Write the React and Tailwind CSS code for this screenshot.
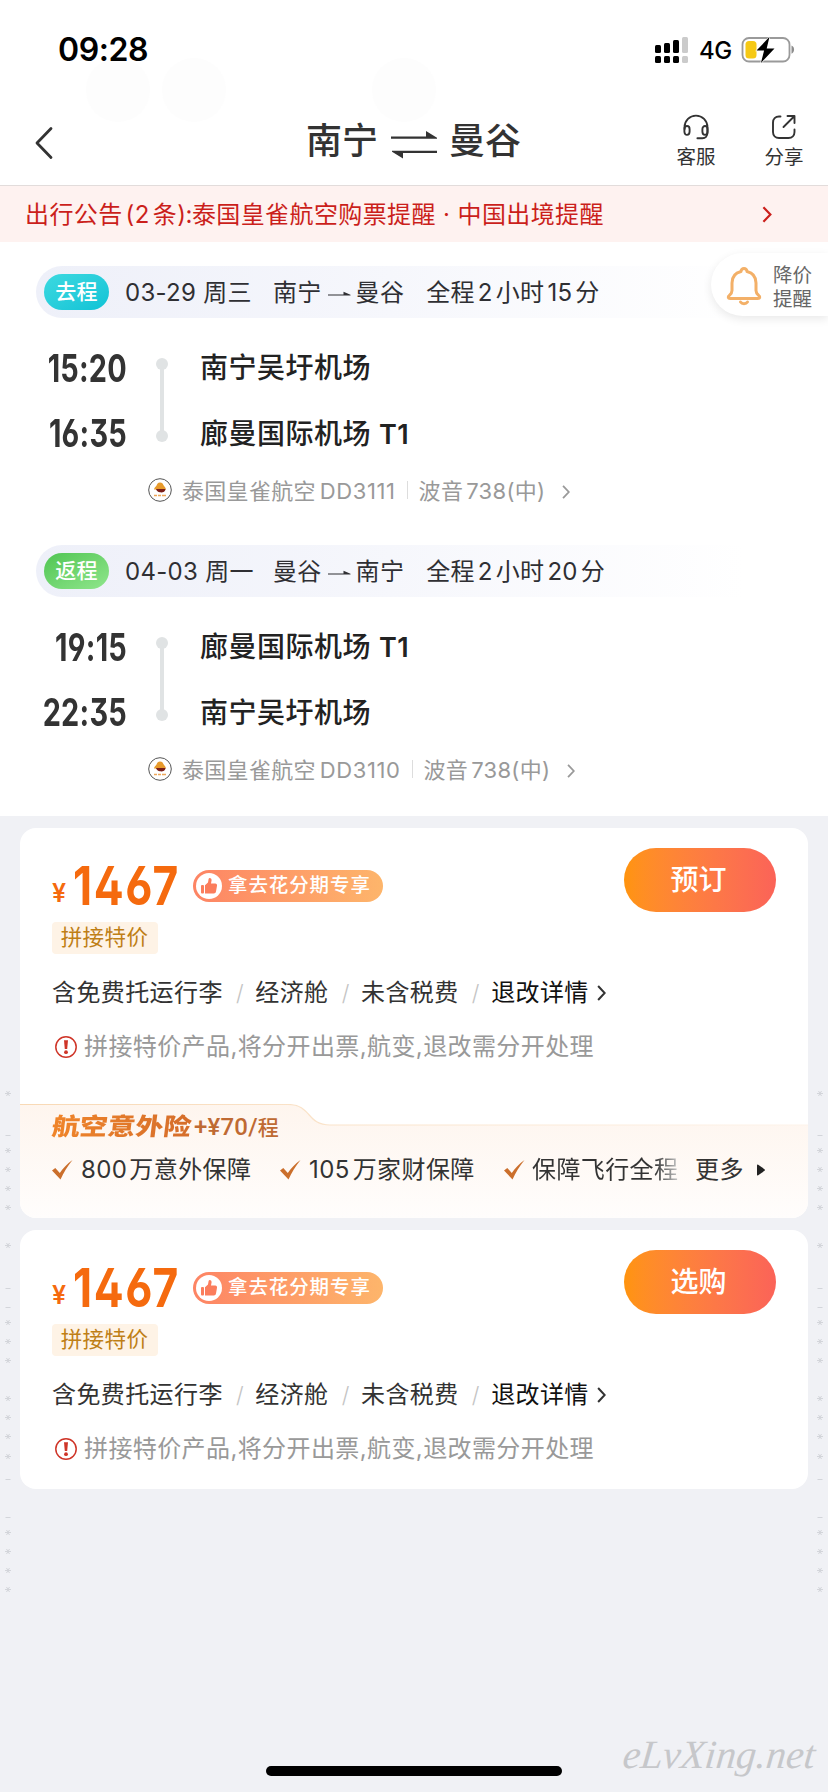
import React from "react";

const trips = [
  {
    label: "去程",
    badge: "from-[#3bd9e0] to-[#0cc3d6]",
    date: "03-29 周三",
    from: "南宁",
    to: "曼谷",
    duration: ["全程", "2", "小时", "15", "分"],
    stops: [
      { time: "15:20", name: "南宁吴圩机场" },
      { time: "16:35", name: "廊曼国际机场", terminal: "T1" },
    ],
    flightNo: "DD3111",
  },
  {
    label: "返程",
    badge: "from-[#4fc552] to-[#8fe68c]",
    date: "04-03 周一",
    from: "曼谷",
    to: "南宁",
    duration: ["全程", "2", "小时", "20", "分"],
    stops: [
      { time: "19:15", name: "廊曼国际机场", terminal: "T1" },
      { time: "22:35", name: "南宁吴圩机场" },
    ],
    flightNo: "DD3110",
  },
];

// y offsets inside the gutter, which starts at the top of the list
const stars = [277, 334, 353, 372, 391, 429, 506, 525, 544, 582, 601, 620, 640, 716, 735, 754, 773];
const dashes = [319, 472, 491, 663, 701];

const Chevron = ({ className }) => (
  <svg viewBox="0 0 10 18" fill="none" stroke="currentColor" strokeWidth="2.3" className={className}>
    <path d="M1.2 1.2 8.6 9l-7.4 7.8" />
  </svg>
);

const StatusBar = () => (
  <div className="relative flex h-[100px] items-start justify-between pl-[58px] pr-[33px]">
    <span className="absolute left-[86px] top-[58px] size-16 rounded-full bg-[#fdfdfd]" />
    <span className="absolute left-[162px] top-[58px] size-16 rounded-full bg-[#fdfdfd]" />
    <span className="absolute left-[372px] top-[58px] size-16 rounded-full bg-[#fdfdfd]" />
    <div className="relative mt-[30px] text-[32px] font-semibold leading-[40px] tracking-[-0.4px] text-black">09:28</div>
    <div className="mt-[36px] flex items-start">
      <svg width="34" height="28" viewBox="0 0 34 28" className="mr-[10px]">
        <g fill="#000">
          <rect x="0" y="9" width="6" height="8" rx="1.5" />
          <rect x="9" y="7" width="6" height="10" rx="1.5" />
          <rect x="18" y="4" width="6" height="13" rx="1.5" />
          <rect x="0" y="20" width="6" height="7" rx="1.5" />
          <rect x="9" y="20" width="6" height="7" rx="1.5" />
          <rect x="18" y="20" width="6" height="7" rx="1.5" />
        </g>
        <g fill="#cbcbcb">
          <rect x="27" y="1" width="6" height="16" rx="1.5" />
          <rect x="27" y="20" width="6" height="7" rx="1.5" />
        </g>
      </svg>
      <span className="mr-[10px] w-[32px] text-[24px] font-medium leading-[29px] tracking-[-0.6px] text-black">4G</span>
      <svg width="54" height="28" viewBox="0 0 54 28">
        <rect x="1.5" y="2" width="47" height="23.5" rx="6.5" fill="#fff" stroke="#9a9a9a" strokeWidth="1.8" />
        <path d="M50.5 9.6c3.4 1.2 3.4 7 0 8.2z" fill="#8d8d8d" />
        <rect x="4.5" y="5" width="11" height="17.5" rx="3.5" fill="#f6c915" />
        <path d="M28.5.8 15.5 14.6h7.6L19.9 27l13.6-14.6h-7.8z" fill="#000" stroke="#fff" strokeWidth="1.2" paintOrder="stroke" />
      </svg>
    </div>
  </div>
);

const NavBar = () => (
  <div className="flex h-[85px] items-start">
    <div className="w-[306px] pl-[34px] pt-[26px] text-[#333]">
      <svg width="20" height="34" viewBox="0 0 20 34" fill="none" stroke="currentColor" strokeWidth="2.8" strokeLinecap="round" strokeLinejoin="round">
        <path d="M17 2.5 3 17l14 14.5" />
      </svg>
    </div>
    <div className="flex w-[370px] items-center pt-[21px] text-[36px] font-medium leading-[40px] text-[#333]">
      <span className="w-[85px]">南宁</span>
      <svg width="47" height="34" viewBox="0 0 47 34" fill="#333" className="mr-[11px] mt-[2px]">
        <path d="M0 11.5h35V6l11 6.8v1H0z" />
        <path d="M46 28H12v5.5L1 26.7v-1h45z" />
      </svg>
      <span>曼谷</span>
    </div>
    <div className="flex w-10 flex-col items-center pt-[14px] text-[#333]">
      <svg width="28" height="26" viewBox="0 0 28 26" fill="none" stroke="currentColor" strokeWidth="1.9" strokeLinecap="round">
        <path d="M2.6 15V13a11.4 11.4 0 0 1 22.8 0v6c0 3-2 5.2-5 5.2h-5" />
        <path d="M2.4 15.2c0-4.2 5.2-4.2 5.2 0v2.4c0 4.4-5.2 4.4-5.2 0zM25.6 15.2c0-4.2-5.2-4.2-5.2 0v2.4c0 4.4 5.2 4.4 5.2 0z" />
      </svg>
      <span className="mt-[4px] whitespace-nowrap text-[19.5px] leading-[26px]">客服</span>
    </div>
    <div className="ml-[48px] flex w-10 flex-col items-center pt-[14px] text-[#333]">
      <svg width="26" height="26" viewBox="0 0 26 26" fill="none" stroke="currentColor" strokeWidth="1.9" strokeLinecap="round" strokeLinejoin="round">
        <path d="M9.5 2.5H8c-3.6 0-6 2.4-6 6V18c0 3.6 2.4 6 6 6h9.5c3.6 0 6-2.4 6-6v-2.5" />
        <path d="M16.5 2h7v7M23 2.5 12.5 13" />
      </svg>
      <span className="mt-[4px] whitespace-nowrap text-[19.5px] leading-[26px]">分享</span>
    </div>
  </div>
);

const Notice = () => (
  <div className="flex h-[57px] items-center border-t border-[#e2dcdb] bg-[#fef2f0] pl-[25px] text-[24px] leading-[36px] tracking-[0.4px] text-[#cb1f1b]">
    <span className="w-[737px] whitespace-nowrap pt-[2px]">
      出行公告<span className="ml-[3px] mr-[3px]">(2</span>条<span className="tracking-[-0.5px]">):</span>泰国皇雀航空购票提醒 · 中国出境提醒
    </span>
    <Chevron className="h-[17px] w-[10px]" />
  </div>
);

const PriceAlert = () => (
  <div className="absolute right-0 top-[11px] flex h-[63px] w-[117px] items-center rounded-l-full bg-white pl-[15px] pt-[2px] shadow-[0_3px_10px_rgba(0,0,0,0.09)]">
    <svg width="36" height="40" viewBox="0 0 36 40" fill="none" stroke="#f3b068" strokeWidth="3" strokeLinejoin="round" strokeLinecap="round">
      <path d="M15 5.5a3 3 0 0 1 6 0c5.5 1.3 9 5.500 9 11.500v7.500c0 2 .8 3.300 2.600 4.800 1.900 1.600 1.300 3.200-.8 3.200H4.200c-2.100 0-2.700-1.600-.8-3.200C5.200 27.800 6 26.500 6 24.500V17C6 11 9.500 6.800 15 5.500z" />
      <path d="M14.5 36c1.5 2.2 5.5 2.2 7 0" />
    </svg>
    <div className="ml-[11px] pt-[3px] text-[19.5px] leading-[24px] text-[#666]">
      <div>降价</div>
      <div>提醒</div>
    </div>
  </div>
);

const AirlineLogo = () => (
  <svg width="24" height="24" viewBox="0 0 24 24">
    <circle cx="12" cy="12" r="11.3" fill="#fff" stroke="#555" strokeWidth="1" />
    <path d="M6 11.5c.3-2 1.7-2.6 2.4-3.800C9.300 6 9.600 4.600 12 4.600s2.700 1 3.400 2.400c.7 1.300 2.300 2.300 2.600 4.500z" fill="#e79a2c" />
    <path d="M8 11h9.500c0 3-3.500 3.800-5.500 3.300C10 14 8.500 13 8 11z" fill="#7a1d17" />
    <path d="M6 17.500h3m1 0h3m1 0h4" stroke="#eda75a" strokeWidth="1.6" />
  </svg>
);

const Trip = ({ trip }) => (
  <div className="h-[279px]">
    <div className="ml-9 mr-[84px] flex h-[52px] items-center rounded-l-full bg-gradient-to-r from-[#eef0f9] via-[#f6f7fc] to-white pl-2 text-[24px] leading-[36px] tracking-[0.3px] text-[#2f2f33]">
      <span className={`flex h-9 w-[65px] items-center justify-center rounded-full bg-gradient-to-br text-[21px] font-medium text-white ${trip.badge}`}>
        {trip.label}
      </span>
      <span className="ml-[16px] w-[148px] whitespace-nowrap pt-[2px]">{trip.date}</span>
      <span className="pt-[2px]">{trip.from}</span>
      <svg width="23" height="8" viewBox="0 0 23 8" className="ml-[6px] mr-[5px] mt-1" fill="currentColor">
        <path d="M0 4.4h15.500V1.800l7 2.900v.9H0z" />
      </svg>
      <span className="pt-[2px]">{trip.to}</span>
      <span className="ml-[22px] flex gap-[3px] whitespace-nowrap pt-[2px]">
        {trip.duration.map((part, idx) => (
          <span key={idx}>{part}</span>
        ))}
      </span>
    </div>
    <div className="flex h-[146px] pt-[17px]">
      <div className="w-[127px] text-[38px] font-bold tracking-[0.3px] text-[#333] [font-feature-settings:'ss01']">
        {trip.stops.map((stop) => (
          <div key={stop.time} className="h-[65px] origin-right scale-x-[0.76] text-right leading-[66px]">
            {stop.time}
          </div>
        ))}
      </div>
      <svg width="12" height="84" viewBox="0 0 12 84" fill="#e0e3e4" className="ml-[29px] mt-[23px]">
        <circle cx="6" cy="6" r="6" />
        <rect x="4" y="6" width="4" height="72" />
        <circle cx="6" cy="78" r="6" />
      </svg>
      <div className="ml-[32px] pt-px text-[28px] font-medium tracking-[0.5px] text-[#222]">
        {trip.stops.map((stop) => (
          <div key={stop.time} className="h-[66px] leading-[65px]">
            {stop.name}
            {stop.terminal && <span className="ml-[8px] text-[27px] font-semibold">{stop.terminal}</span>}
          </div>
        ))}
      </div>
    </div>
    <div className="flex h-[52px] items-center pl-[148px] text-[22px] leading-[30px] tracking-[0.3px] text-[#999]">
      <AirlineLogo />
      <span className="ml-[10px] pt-[2px]">泰国皇雀航空</span>
      <span className="ml-[4px] pt-[2px] tracking-[0.6px]">{trip.flightNo}</span>
      <span className="mx-[11px] h-[18px] w-px bg-[#ddd]" />
      <span className="pt-[2px]">波音</span>
      <span className="ml-[3px] pt-[2px]">738(中)</span>
      <Chevron className="ml-[17px] mt-[3px] h-[14px] w-[8px]" />
    </div>
  </div>
);

const Gutter = ({ className }) => (
  <div className={`w-5 shrink-0 ${className}`}>
    <svg width="8" height="800" viewBox="0 0 8 800" stroke="#d3d5da" strokeWidth="1">
      {stars.map((y) => (
        <path key={y} d={`M1 ${y}.5h6M2.5 ${y - 2}l3 5M5.5 ${y - 2}l-3 5`} />
      ))}
      {dashes.map((y) => (
        <path key={y} d={`M1.5 ${y}.5h5`} />
      ))}
    </svg>
  </div>
);

const Slash = () => <span className="w-[32.5px] pl-[2px] text-center text-[22px] font-light text-[#c4c4c4]">/</span>;

const OfferBody = ({ action }) => (
  <div className="h-[276px] px-8 pt-5">
    <div className="flex h-[70px] items-start justify-between">
      <div className="flex h-[66px] items-center text-[#f56a0e]">
        <span className="mt-[26px] w-[21px] text-[25px] font-semibold">¥</span>
        <span className="mt-[10px] w-[120px] origin-left scale-x-[0.82] text-[54px] font-bold leading-[66px] tracking-[2px] [font-feature-settings:'ss01']">
          1467
        </span>
        <span className="mt-[10px] flex h-8 w-[190px] items-center rounded-full bg-gradient-to-r from-[#fd8464] to-[#fdb56b] pl-[3px] text-[19.5px] font-medium tracking-[0.9px] text-white">
          <span className="flex size-[26px] items-center justify-center rounded-full bg-white">
            <svg width="18" height="18" viewBox="0 0 18 18" fill="#fb7d5c">
              <rect x="1" y="8" width="3" height="8.5" rx="1" />
              <path d="M5 8.2 8 5.5 8.6 2c.3-1.5 3-1.2 3 1.200L11 6.600h4.200c1.400 0 2 1 1.800 2.200l-1 5.800c-.2 1.200-1 1.900-2.200 1.900H5z" />
            </svg>
          </span>
          <span className="ml-[6px] whitespace-nowrap">拿去花分期专享</span>
        </span>
      </div>
      <button className="h-16 w-[152px] rounded-full bg-gradient-to-r from-[#ff940c] to-[#fb6358] pr-[3px] text-[28px] font-medium text-white">
        {action}
      </button>
    </div>
    <div className="mt-[4px] flex h-8 w-[106px] items-center justify-center rounded bg-[#fef3e6] pb-[2px] pr-px text-[21.5px] tracking-[0.4px] text-[#bf7f16]">
      拼接特价
    </div>
    <div className="mt-[21px] flex h-9 items-center text-[24px] leading-9 tracking-[0.4px] text-[#333]">
      <span>含免费托运行李</span>
      <Slash />
      <span>经济舱</span>
      <Slash />
      <span>未含税费</span>
      <Slash />
      <span className="text-[#111]">退改详情</span>
      <Chevron className="ml-[8px] h-[16px] w-[9px]" />
    </div>
    <div className="mt-[18px] flex h-9 items-center pl-[3px] text-[24px] leading-9 tracking-[0.4px] text-[#999]">
      <svg width="22" height="22" viewBox="0 0 22 22" className="mr-[7px]">
        <circle cx="11" cy="11" r="10.2" fill="none" stroke="#cf3528" strokeWidth="1.5" />
        <path d="M9 4.2h4l-.8 8.800H9.800z" fill="#cf3528" />
        <circle cx="11" cy="16.2" r="1.9" fill="#cf3528" />
      </svg>
      拼接特价产品,将分开出票,航变,退改需分开处理
    </div>
  </div>
);

const Check = () => (
  <svg width="21" height="20" viewBox="0 0 21 20" className="shrink-0">
    <path d="M0 10.5 3.3 8l4.500 5C11 8.500 15 3.500 20.500 0 15.500 6.500 11.500 12.500 8.500 19.500z" fill="#cb6f2c" />
  </svg>
);

const Insurance = () => (
  <div className="relative h-[114px]">
    <svg width="788" height="114" viewBox="0 0 788 114" className="absolute inset-0">
      <defs>
        <linearGradient id="panel" x1="0" y1="0" x2="0" y2="1">
          <stop offset="0" stopColor="#fef5ee" />
          <stop offset="1" stopColor="#fffdfc" />
        </linearGradient>
        <linearGradient id="edge" x1="0" y1="0" x2="1" y2="0">
          <stop offset="0" stopColor="#f8d9b5" />
          <stop offset="1" stopColor="#fdf3ea" />
        </linearGradient>
      </defs>
      <path d="M0 .5h268c24 0 18 20.5 42 20.5h478v93H0z" fill="url(#panel)" />
      <path d="M0 .5h268c24 0 18 20.5 42 20.5h478" fill="none" stroke="url(#edge)" strokeWidth="1.2" />
    </svg>
    <div className="relative pl-8 pt-[8px]">
      <div className="flex h-[30px] items-center">
        <span className="w-[142px] origin-left -skew-x-6 scale-x-[1.16] whitespace-nowrap bg-gradient-to-r from-[#f0852a] to-[#d0692a] bg-clip-text text-[24px] font-black leading-[30px] text-transparent">
          航空意外险
        </span>
        <span className="font-[Roboto,'Noto_Sans_CJK_SC',sans-serif] text-[24px] font-medium leading-[30px] tracking-[0.2px] text-[#bf6a33]">
          +¥70/<span className="text-[21px]">程</span>
        </span>
      </div>
      <div className="mt-[10px] flex h-9 items-center text-[24px] leading-9 tracking-[0.4px] text-[#333]">
        <Check />
        <span className="ml-[8px] flex w-[199px] gap-[2px]"><span>800</span><span>万意外保障</span></span>
        <Check />
        <span className="ml-[8px] flex w-[195px] gap-[3px]"><span>105</span><span>万家财保障</span></span>
        <Check />
        <span className="ml-[7px] w-[163px] whitespace-nowrap bg-gradient-to-r from-[#333] from-75% to-[#ccc] to-90% bg-clip-text text-transparent">
          保障飞行全程
        </span>
        <span>更多</span>
        <svg width="8" height="12" viewBox="0 0 8 12" fill="#222" className="ml-[13px]">
          <path d="M0 1.5Q0 0 1.2.8L7.5 5.2Q8.300 6 7.500 6.800L1.200 11.200Q0 12 0 10.500z" />
        </svg>
      </div>
    </div>
  </div>
);

const App = () => {
  return (
    <div className="flex h-[1792px] w-[828px] flex-col overflow-hidden bg-[#f0f1f5] font-[Inter,'Noto_Sans_CJK_SC',sans-serif]">
      <header className="bg-white">
        <StatusBar />
        <NavBar />
        <Notice />
      </header>

      <section className="relative h-[574px] shrink-0 bg-white pt-6">
        <PriceAlert />
        {trips.map((trip) => (
          <Trip key={trip.label} trip={trip} />
        ))}
      </section>

      <main className="flex">
        <Gutter className="pl-1" />
        <div className="mt-3 flex flex-1 flex-col gap-3">
          <div className="h-[390px] overflow-hidden rounded-2xl bg-white">
            <OfferBody action="预订" />
            <Insurance />
          </div>
          <div className="h-[259px] overflow-hidden rounded-2xl bg-white">
            <OfferBody action="选购" />
          </div>
        </div>
        <Gutter className="pl-2" />
      </main>

      <footer className="mt-auto flex h-[70px] items-start pl-[266px]">
        <div className="mt-[44px] h-[10px] w-[296px] rounded-full bg-black" />
        <div className="ml-[61px] mt-[3px] -skew-x-6 font-['Liberation_Serif',serif] text-[40px] italic leading-[60px] text-[#c6c7ca]">
          eLvXing.net
        </div>
      </footer>
    </div>
  );
};

export default App;
